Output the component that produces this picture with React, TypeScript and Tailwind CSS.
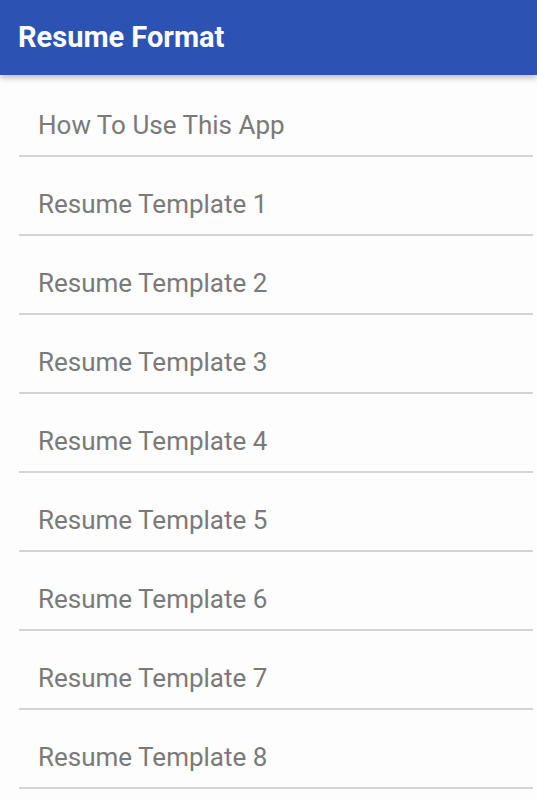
const items = [
  "How To Use This App",
  "Resume Template 1",
  "Resume Template 2",
  "Resume Template 3",
  "Resume Template 4",
  "Resume Template 5",
  "Resume Template 6",
  "Resume Template 7",
  "Resume Template 8",
];

export default function App() {
  return (
    <div className="min-h-screen bg-[#fdfdfd] font-['Roboto',sans-serif]">
      <header className="relative z-10 flex h-[75px] items-center bg-[#2c53b4] px-[18px] shadow-[0_3px_6px_rgba(0,0,0,0.25)]">
        <h1 className="text-[29px] font-bold text-white">Resume Format</h1>
      </header>
      <ul className="pt-[3px] pl-[19px] pr-[4px]">
        {items.map((item) => (
          <li
            key={item}
            className="flex h-[79px] items-center border-b-2 border-[#d4d4d4] pt-[18px] pl-[19px] text-[26px] text-[#7a7a7a]"
          >
            {item}
          </li>
        ))}
      </ul>
    </div>
  );
}
